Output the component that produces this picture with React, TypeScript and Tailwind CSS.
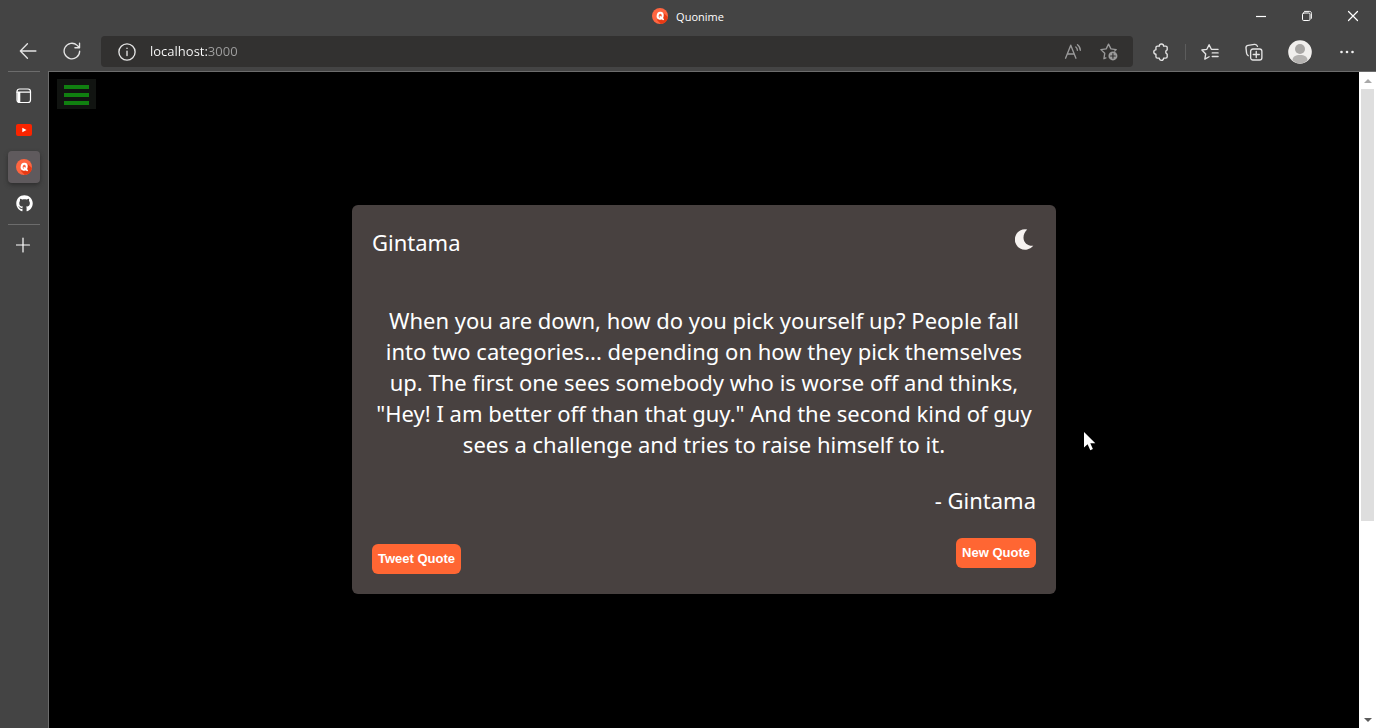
import type { ReactNode } from "react";
import { FaGithub } from "react-icons/fa";

function QuonimeLogo() {
  return (
    <svg viewBox="0 0 16 16" className="size-4" aria-hidden="true">
      <circle cx="8" cy="8" r="8" fill="#ff6540" />
      <path d="M11.500 5 15.900 9A8 8 0 0 1 8.800 16L5 12Z" fill="#e83a14" />
      <ellipse cx="8.100" cy="7.700" rx="2.500" ry="3" fill="none" stroke="#fff" strokeWidth="2" transform="rotate(12 8 8)" />
      <path d="m8.300 8.800 2.900 2.500" stroke="#fff" strokeWidth="1.700" strokeLinecap="round" />
    </svg>
  );
}

function Icon({ children, className = "size-4" }: { children: ReactNode; className?: string }) {
  return (
    <svg
      viewBox="0 0 16 16"
      className={className}
      fill="none"
      stroke="currentColor"
      strokeWidth="1.2"
      strokeLinecap="round"
      strokeLinejoin="round"
      aria-hidden="true"
    >
      {children}
    </svg>
  );
}

function ToolButton({
  label,
  className,
  children,
}: {
  label: string;
  className: string;
  children: ReactNode;
}) {
  return (
    <button type="button" aria-label={label} className={`flex items-center justify-center ${className}`}>
      {children}
    </button>
  );
}

function TitleBar() {
  return (
    <header className="grid h-9 shrink-0 grid-cols-[1fr_auto_1fr] items-start text-white">
      <span />
      <div className="flex h-8 items-center gap-2">
        <QuonimeLogo />
        <span className="pt-0.5 font-['Open_Sans',sans-serif] text-[11px]">Quonime</span>
      </div>
      <div className="flex h-8 justify-end">
        <ToolButton label="Minimize" className="h-8 w-[46px]">
          <Icon className="size-4">
            <path d="M3 8.500h10" strokeLinecap="butt" />
          </Icon>
        </ToolButton>
        <ToolButton label="Restore" className="h-8 w-[46px]">
          <Icon className="size-4">
            <rect x="3.500" y="5" width="7.500" height="7.500" rx="1.200" strokeWidth="1" />
            <path d="M5.500 3.400h5c1.300 0 1.900.6 1.900 1.900v5" strokeWidth="1" />
          </Icon>
        </ToolButton>
        <ToolButton label="Close" className="h-8 w-[46px]">
          <Icon className="size-4">
            <path d="m3.500 3.500 9 9m0-9-9 9" />
          </Icon>
        </ToolButton>
      </div>
    </header>
  );
}

function Toolbar() {
  return (
    <nav className="flex h-[35px] shrink-0 items-start text-[#e4e4e4]">
      <div className="flex w-[101px] shrink-0 pl-1">
        <ToolButton label="Back" className="h-[30px] w-12">
          <Icon className="size-[18px]">
            <path d="M15 8H1.200M7.500 1.600 1.200 8l6.300 6.400" />
          </Icon>
        </ToolButton>
        <ToolButton label="Refresh" className="h-[30px] w-10">
          <Icon className="size-[18px]">
            <path d="M14.800 8.200A6.900 6.900 0 1 1 12.600 3l1.900 1.900M14.700 1v4.100h-4.100" />
          </Icon>
        </ToolButton>
      </div>
      <form className="flex h-[31px] min-w-0 flex-1 items-center rounded bg-[#323130] pr-3.5 pl-[17px]">
        <label htmlFor="address" aria-label="Address" className="flex">
          <Icon className="size-[18px]">
            <circle cx="8" cy="8" r="7.200" />
            <path d="M8 7.200v4M8 4.700v.1" />
          </Icon>
        </label>
        <input
          id="address"
          type="text"
          defaultValue="localhost:3000"
          className="ml-3.5 min-w-0 flex-1 bg-linear-to-r from-white from-[57px] to-[#a0a0a0] to-[58px] bg-clip-text font-['Open_Sans',sans-serif] text-[13px] text-transparent outline-none"
        />
        <div className="flex gap-4 text-[#9a9a9a]">
          <ToolButton label="Read aloud" className="h-[31px] w-5">
            <Icon className="size-[18px]">
              <path d="m1.400 13.500 4.600-11.500 4.600 11.500M3 9.800h6M10.500 3.500c1 .8 1.400 1.700 1.400 2.900M12 1.500c1.700 1.300 2.500 2.800 2.500 4.900" />
            </Icon>
          </ToolButton>
          <ToolButton label="Add to favorites" className="h-[31px] w-5">
            <Icon className="size-[18px]">
              <path d="m5.200 13.200-1.700.8.700-4.800L.8 5.900l4.700-.7L7.600 1l2.100 4.200 4.700.7-1.300 1.300" />
              <circle cx="11.500" cy="11.500" r="4" fill="currentColor" stroke="none" />
              <path d="M11.500 9.400v4.200M9.400 11.500h4.200" stroke="#323130" strokeWidth="1" />
            </Icon>
          </ToolButton>
        </div>
      </form>
      <div className="flex h-[31px] shrink-0 items-center pl-1">
        <ToolButton label="Extensions" className="h-[31px] w-12">
          <Icon className="size-[18px]">
            <path d="M4.800 2.800h1.700a1.900 1.900 0 0 1 3.800 0h1.900c.8 0 1.300.5 1.300 1.300v2.100a1.900 1.900 0 0 0 0 3.600v2.400c0 .8-.5 1.300-1.300 1.300h-1.900a1.900 1.900 0 0 1-3.800 0H4.800c-.8 0-1.300-.5-1.300-1.300V9.900a1.900 1.900 0 0 1 0-3.800v-2c0-.8.500-1.300 1.300-1.300Z" />
          </Icon>
        </ToolButton>
        <span className="h-4 w-px bg-[#5c5c5c]" />
        <ToolButton label="Favorites" className="h-[31px] w-12">
          <Icon className="size-[18px]">
            <path d="m7.200 12.200-3.800 2.100.8-4.600L.8 6.200l4.400-.6L7.200 1.500l2 4.100h6M10 8.800h5.200M10 12h5.200" />
          </Icon>
        </ToolButton>
        <ToolButton label="Collections" className="h-[31px] w-10">
          <Icon className="size-[18px]">
            <rect x="5" y="5.300" width="10" height="9.800" rx="2" />
            <path d="M10 7.500v5.400M7.300 10.200h5.400M2.900 11.300C1.900 10.700 1.600 10 1.400 9L.9 4.600c-.2-1.500.5-2.300 1.900-2.500L8.300 1.200c1.400-.2 2.400.3 2.800 1.800" />
          </Icon>
        </ToolButton>
        <ToolButton label="Profile" className="h-[31px] w-[52px]">
          <svg viewBox="0 0 24 24" className="size-6" aria-hidden="true">
            <circle cx="12" cy="12" r="11.800" fill="#f1efed" />
            <circle cx="12" cy="9" r="5" fill="#a8a6a4" />
            <path d="M4.500 20.500c0-4 3-5.500 7.500-5.500s7.500 1.500 7.500 5.500a11.600 11.600 0 0 1-15 0Z" fill="#b4b2b0" />
          </svg>
        </ToolButton>
        <ToolButton label="Settings and more" className="mr-2 h-[31px] w-[42px]">
          <svg viewBox="0 0 16 16" className="size-4" fill="#f2f2f2" aria-hidden="true">
            <circle cx="2.500" cy="8" r="1.300" />
            <circle cx="8" cy="8" r="1.300" />
            <circle cx="13.500" cy="8" r="1.300" />
          </svg>
        </ToolButton>
      </div>
    </nav>
  );
}

function TabRail() {
  return (
    <aside className="flex w-12 shrink-0 flex-col items-center text-white">
      <hr className="w-8 border-[#6c6c6c]" />
      <ToolButton label="Tab actions" className="mt-2 size-8">
        <Icon className="size-4">
          <rect x="1" y="1" width="13.500" height="13.500" rx="2.500" />
          <path d="M1.500 4h2.800v10H1.500z" fill="currentColor" stroke="none" />
          <path d="M1 4.200h13.500" />
        </Icon>
      </ToolButton>
      <ToolButton label="YouTube" className="mt-0.5 size-8">
        <svg viewBox="0 0 16 12" className="h-3 w-4" aria-hidden="true">
          <rect width="16" height="12" rx="2" fill="#fa2400" />
          <path d="m6.300 3.700 4.200 2.300-4.200 2.300z" fill="#fff" />
        </svg>
      </ToolButton>
      <ToolButton label="Quonime" className="mt-[5px] size-8 rounded bg-[#5f5a5d] shadow-[0_2px_4px_#222a]">
        <QuonimeLogo />
      </ToolButton>
      <ToolButton label="GitHub" className="mt-1 size-8">
        <FaGithub className="size-[17px]" />
      </ToolButton>
      <hr className="mt-[5px] w-8 border-[#6c6c6c]" />
      <ToolButton label="New tab" className="mt-1 size-8">
        <Icon className="size-4">
          <path d="M7 1v14M.5 8h13" />
        </Icon>
      </ToolButton>
    </aside>
  );
}

function QuoteCard() {
  return (
    <article className="w-full max-w-[704px] rounded-md bg-[#484140] p-5 font-['Noto_Sans',sans-serif] text-[22px] leading-[31px] text-white">
      <div className="flex items-start justify-between pt-0.5">
        <h1>Gintama</h1>
        <button type="button" aria-label="Toggle dark mode" className="mt-0.5 mr-0.5">
          <svg viewBox="0 0 19 21" className="h-[21px] w-[19px]" fill="#f6f2f0" aria-hidden="true">
            <path d="M12.200.4A10.300 10.300 0 1 0 18.300 16.800C13 17.300 8.800 14 8.500 9 8.400 5.500 9.800 2.500 12.200.4Z" />
          </svg>
        </button>
      </div>
      <blockquote className="mt-[47px] text-center">
        When you are down, how do you pick yourself up? People fall into two categories... depending
        on how they pick themselves up. The first one sees somebody who is worse off and thinks,
        "Hey! I am better off than that guy." And the second kind of guy sees a challenge and tries
        to raise himself to it.
      </blockquote>
      <p className="mt-[25px] text-right">- Gintama</p>
      <div className="mt-[22px] flex items-start justify-between font-['Liberation_Sans',Arial,sans-serif] text-[13px] leading-[30px] font-bold">
        <button type="button" className="mt-1.5 rounded-md bg-[#ff6633] px-1.5">
          Tweet Quote
        </button>
        <button type="button" className="rounded-md bg-[#ff6633] px-1.5">
          New Quote
        </button>
      </div>
    </article>
  );
}

function ScrollBar() {
  return (
    <div className="flex w-[17px] shrink-0 flex-col items-center bg-white">
      <ToolButton label="Scroll up" className="h-[17px] w-full text-[#a9a9a9]">
        <svg viewBox="0 0 8 4" className="h-1 w-2" fill="currentColor" aria-hidden="true">
          <path d="M0 4 4 0l4 4z" />
        </svg>
      </ToolButton>
      <div className="w-full flex-1 px-0.5">
        <div className="h-[69.5%] bg-[#dedede]" />
      </div>
      <ToolButton label="Scroll down" className="h-[17px] w-full text-[#5c5c5c]">
        <svg viewBox="0 0 8 4" className="h-1 w-2" fill="currentColor" aria-hidden="true">
          <path d="m0 0 4 4 4-4z" />
        </svg>
      </ToolButton>
    </div>
  );
}

export default function App() {
  return (
    <div className="relative flex h-screen flex-col overflow-hidden bg-[#444444]">
      <TitleBar />
      <Toolbar />
      <div className="flex min-h-0 flex-1">
        <TabRail />
        <div className="flex min-w-0 flex-1 border-t border-l border-[#6c6c6c] bg-black">
          <main className="grid min-w-0 flex-1 grid-rows-[30px_1fr_30px] justify-items-center pt-[7px] pb-[9px]">
            <button
              type="button"
              aria-label="Menu"
              className="ml-2 flex w-[39px] flex-col items-center justify-center gap-1 justify-self-start bg-[#111411] pt-px"
            >
              <span className="h-1 w-[25px] bg-[#108010]" />
              <span className="h-1 w-[25px] bg-[#108010]" />
              <span className="h-1 w-[25px] bg-[#108010]" />
            </button>
            <div className="flex w-full items-center justify-center">
              <QuoteCard />
            </div>
          </main>
          <ScrollBar />
        </div>
      </div>
      <svg
        viewBox="0 0 12 19"
        className="pointer-events-none absolute top-[432px] left-[1084px] h-[19px] w-3"
        fill="#fff"
        aria-hidden="true"
      >
        <path d="M0 0v15.500l3.600-3.300 2.700 6 2.600-1.100-2.600-5.900h5z" />
      </svg>
    </div>
  );
}
